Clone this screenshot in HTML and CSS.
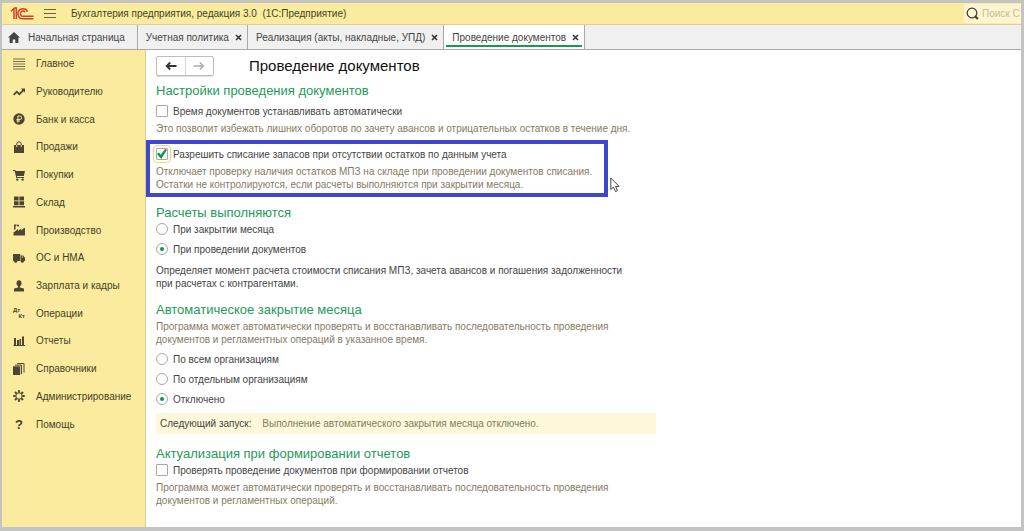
FILE: index.html
```html
<!DOCTYPE html>
<html lang="ru">

<head>
    <meta charset="UTF-8">
    <meta name="viewport" content="width=device-width, initial-scale=1.0">
    <title>Проведение документов</title>
    <link rel="stylesheet" href="styles.css">
</head>

<body>
    <header class="topbar">
        <svg class="logo" viewBox="0 0 24 13" fill="none" stroke="#d5402b" stroke-width="1.5">
            <path d="M1 4.2L4 1.500V12M6.300 12V1H4" />
            <path d="M17.500 4.600A5 5 0 1 0 13 11.800H23.500" />
            <path d="M15.200 5.200A2.600 2.600 0 1 0 13 9.300H23.500" />
        </svg>
        <button class="menu-btn" type="button" aria-label="Меню">
            <svg viewBox="0 0 12 10" stroke="#6b6440" stroke-width="1">
                <path d="M0 .5h12M0 4.5h12M0 8.5h12" />
            </svg>
        </button>
        <span class="app-title">Бухгалтерия предприятия, редакция 3.0&nbsp; (1С:Предприятие)</span>
        <label class="search">
            <svg viewBox="0 0 13 13" fill="none" stroke="#3a3a30">
                <circle cx="6" cy="6" r="4.8" stroke-width="1.2" />
                <path d="M9.2 9.2l2.6 2.8" stroke-width="2" />
            </svg>
            <input type="text" placeholder="Поиск С" aria-label="Поиск">
        </label>
    </header>

    <nav class="tabs">
        <div class="tab tab-home">
            <svg viewBox="0 0 12 11" fill="#444">
                <path d="M6 0l6 5.6H10.4V11H7.3V7.4H4.7V11H1.6V5.6H0z" />
            </svg>
            <a href="#">Начальная страница</a>
        </div>
        <div class="tab"><a href="#">Учетная политика</a><button class="close" type="button" aria-label="Закрыть"><svg viewBox="0 0 7 7"><path d="M1 1l5 5M6 1l-5 5" /></svg></button></div>
        <div class="tab"><a href="#">Реализация (акты, накладные, УПД)</a><button class="close" type="button" aria-label="Закрыть"><svg viewBox="0 0 7 7"><path d="M1 1l5 5M6 1l-5 5" /></svg></button></div>
        <div class="tab active"><a href="#">Проведение документов</a><button class="close" type="button" aria-label="Закрыть"><svg viewBox="0 0 7 7"><path d="M1 1l5 5M6 1l-5 5" /></svg></button></div>
    </nav>

    <div class="workspace">
        <nav class="sidebar">
            <ul>
                <li><a href="#"><svg viewBox="0 0 12 12"><path d="M0 .5h12v1H0zM0 3h12v1H0zM0 5.500h12v1H0zM0 8h12v1H0zM0 10.500h12v1H0z" opacity=".75" /></svg>Главное</a></li>
                <li><a href="#"><svg viewBox="0 0 12 12"><path d="M0 8.200L3.800 4.400 6.400 7 9.300 4 8 2.600H12V6.600L10.600 5.300 6.400 9.500 3.800 6.900 1.300 9.500z" /></svg>Руководителю</a></li>
                <li><a href="#"><svg viewBox="0 0 12 12"><circle cx="6" cy="6" r="5.700" /><path class="cutout" d="M4.900 9.500V3h2a1.700 1.700 0 0 1 0 3.500H3.500M3.500 8h3.500" /></svg>Банк и касса</a></li>
                <li><a href="#"><svg viewBox="0 0 12 12"><path d="M1 4h10v8H1z" /><path class="line" d="M3.800 6V3a2.200 2.200 0 0 1 4.400 0v3" /><path class="cutout" d="M3.800 4v2M8.200 4v2" /></svg>Продажи</a></li>
                <li><a href="#"><svg viewBox="0 0 12 12"><path d="M0 1h2.400l.4 1H12L10.800 7H4l.2 1H11v1H3.300L1.700 2H0z" /><circle cx="4.300" cy="10.600" r="1.200" /><circle cx="9.600" cy="10.600" r="1.200" /></svg>Покупки</a></li>
                <li><a href="#"><svg viewBox="0 0 12 12"><path d="M1 .5h4.600v4H1zM6.400.5H11v4H6.400zM1 5.300h4.600v4H1zM6.400 5.300H11v4H6.400zM0 10h12v1.500H0z" /></svg>Склад</a></li>
                <li><a href="#"><svg viewBox="0 0 12 12"><path d="M.5 11.500V8.500L5 5v2l3.200-2.500v2L11 4h1v7.500z" /><path d="M1 6V2h1.500v3zM1 .5h2.500v1.500H1zM4 .8h2v1.500H4z" /></svg>Производство</a></li>
                <li><a href="#"><svg viewBox="0 0 12 12"><path d="M0 2h7.300v7H0zM7.800 3.500h2.500L12 6v3H7.800z" /><path class="cutout" d="M8.800 5h1.300" /><circle cx="2.700" cy="9.200" r="1.500" /><circle cx="9.300" cy="9.200" r="1.500" /></svg>ОС и НМА</a></li>
                <li><a href="#"><svg viewBox="0 0 12 12"><ellipse cx="6" cy="3.300" rx="2.500" ry="3" /><path d="M5 5.500h2v2l3.200.8q.8.300.8 1.200v2H1v-2q0-.9.800-1.200L5 7.500z" /></svg>Зарплата и кадры</a></li>
                <li><a href="#"><span class="dt-kt"><b>Дт</b><b>Кт</b></span>Операции</a></li>
                <li><a href="#"><svg viewBox="0 0 12 12"><path d="M1 3h2v7H1zM4 5h2v5H4zM6.500 4H8v6H6.500zM9 1.500h2V10H9zM.5 10H12v1H.5z" /></svg>Отчеты</a></li>
                <li><a href="#"><svg viewBox="0 0 12 12"><path d="M0 3.300h7.200V12H0z" /><path class="line" d="M2 2.200h6.500V11M4 .6h7V9.500" /></svg>Справочники</a></li>
                <li><a href="#"><svg viewBox="0 0 12 12"><circle class="line" cx="6" cy="6" r="3.200" /><path class="line teeth" d="M6 .3v2.400M6 9.300v2.400M.3 6h2.400M9.300 6h2.400M2 2l1.600 1.600M8.400 8.400L10 10M10 2L8.400 3.600M3.600 8.400L2 10" /></svg>Администрирование</a></li>
                <li><a href="#"><b class="question">?</b>Помощь</a></li>
            </ul>
        </nav>

        <main class="content">
            <div class="page-head">
                <div class="history">
                    <button type="button" aria-label="Назад"><svg viewBox="0 0 12 10" fill="none" stroke="#333" stroke-width="1.800"><path d="M11.500 5H2M5.200 1.500L1.700 5l3.500 3.500" /></svg></button>
                    <button type="button" aria-label="Вперед"><svg viewBox="0 0 12 10" fill="none" stroke="#aaa" stroke-width="1.500"><path d="M.5 5H10M6.800 1.500L10.300 5 6.800 8.500" /></svg></button>
                </div>
                <h1>Проведение документов</h1>
            </div>

            <section class="posting">
                <h2>Настройки проведения документов</h2>
                <label class="option"><input type="checkbox">Время документов устанавливать автоматически</label>
                <p class="hint">Это позволит избежать лишних оборотов по зачету авансов и отрицательных остатков в течение дня.</p>
                <div class="highlight">
                    <label class="option"><input type="checkbox" class="focused" checked>Разрешить списание запасов при отсутствии остатков по данным учета</label>
                    <p class="hint">Отключает проверку наличия остатков МПЗ на складе при проведении документов списания.<br>Остатки не контролируются, если расчеты выполняются при закрытии месяца.</p>
                    <svg class="cursor" viewBox="0 0 10 16" fill="#fff" stroke="#444">
                        <path d="M.8 1v11.500l2.700-2.400 2 4.500 2-.9-2-4.300h3.700z" />
                    </svg>
                </div>
            </section>

            <section class="calculation">
                <h2>Расчеты выполняются</h2>
                <div class="options">
                    <label class="option"><input type="radio" name="calc">При закрытии месяца</label>
                    <label class="option"><input type="radio" name="calc" checked>При проведении документов</label>
                </div>
                <p class="note">Определяет момент расчета стоимости списания МПЗ, зачета авансов и погашения задолженности<br>при расчетах с контрагентами.</p>
            </section>

            <section>
                <h2>Автоматическое закрытие месяца</h2>
                <p class="hint lead">Программа может автоматически проверять и восстанавливать последовательность проведения<br>документов и регламентных операций в указанное время.</p>
                <div class="options">
                    <label class="option"><input type="radio" name="auto">По всем организациям</label>
                    <label class="option"><input type="radio" name="auto">По отдельным организациям</label>
                    <label class="option"><input type="radio" name="auto" checked>Отключено</label>
                </div>
                <p class="next-run"><span>Следующий запуск:</span> Выполнение автоматического закрытия месяца отключено.</p>
            </section>

            <section>
                <h2>Актуализация при формировании отчетов</h2>
                <label class="option"><input type="checkbox">Проверять проведение документов при формировании отчетов</label>
                <p class="hint">Программа может автоматически проверять и восстанавливать последовательность проведения<br>документов и регламентных операций.</p>
            </section>
        </main>
    </div>
</body>

</html>
```
FILE: styles.css
```css
* {
    box-sizing: border-box;
}

body {
    margin: 0;
    min-height: 100vh;
    display: flex;
    flex-direction: column;
    border: solid #c3c3c3;
    border-width: 3px 3px 4px 2px;
    background-color: #fff;
    font-family: "Liberation Sans", Arial, sans-serif;
    font-size: 10px;
    color: #444;
}

h1,
h2,
p,
ul {
    margin: 0;
    padding: 0;
    font-weight: normal;
}

a {
    color: inherit;
    text-decoration: none;
}

button {
    border: none;
    padding: 0;
    background: none;
    cursor: pointer;
}

svg {
    display: block;
    flex: none;
}

/* top bar */
.topbar {
    display: flex;
    align-items: center;
    height: 22px;
    padding-left: 8px;
    background-color: #fbeb9e;
    border-bottom: 1px solid #d9cf98;
}

.logo {
    width: 24px;
    height: 13px;
}

.menu-btn {
    margin-left: 10px;
}

.menu-btn svg {
    width: 12px;
    height: 10px;
}

.app-title {
    margin-left: 15px;
    color: #453f28;
}

.search {
    display: flex;
    align-items: center;
    gap: 3px;
    width: 57px;
    height: 19px;
    margin-left: auto;
    padding-left: 2px;
    background-color: #fdf5cf;
}

.search svg {
    width: 13px;
    height: 13px;
}

.search input {
    flex: 1;
    min-width: 0;
    padding: 0;
    border: none;
    outline: none;
    background: none;
    font: inherit;
}

.search input::placeholder {
    color: #c5bd98;
}

/* tabs */
.tabs {
    display: flex;
    height: 25px;
    background-color: #f0f0f0;
    border-bottom: 1px solid #a9a9a9;
}

.tab {
    display: flex;
    align-items: center;
    gap: 6px;
    padding: 0 5px 0 8px;
    border-right: 1px solid #a9a9a9;
}

.tab-home {
    gap: 8px;
    padding: 0 12px 0 6px;
}

.tab-home svg {
    width: 12px;
    height: 11px;
}

.close svg {
    width: 7px;
    height: 7px;
    stroke: #333;
    stroke-width: 1.5;
}

.tab.active {
    background: linear-gradient(#179a50, #179a50) center bottom 2px / calc(100% - 4px) 2px no-repeat #fff;
}

/* sections panel */
.workspace {
    display: flex;
    flex: 1;
}

.sidebar {
    flex: none;
    width: 144px;
    background-color: #fbeb9e;
    border-right: 1px solid #d8cd90;
}

.sidebar ul {
    display: grid;
    grid-auto-rows: 1fr;
    height: 388px;
    list-style: none;
}

.sidebar a {
    display: flex;
    align-items: center;
    gap: 11px;
    height: 100%;
    padding-left: 11px;
    color: #453f28;
}

.sidebar svg {
    width: 12px;
    height: 12px;
    fill: #4a4632;
}

.sidebar .line {
    fill: none;
    stroke: #4a4632;
}

.sidebar .teeth {
    stroke-width: 2;
}

.sidebar .cutout {
    fill: none;
    stroke: #fbeb9e;
}

.dt-kt {
    display: flex;
    flex-direction: column;
    width: 12px;
    font-size: 6px;
    line-height: 6px;
}

.dt-kt b:last-child {
    align-self: flex-end;
}

.question {
    width: 12px;
    font-size: 13px;
    text-align: center;
}

/* form */
.content {
    flex: 1;
    padding: 6px 10px 0;
}

.page-head {
    display: flex;
    align-items: center;
    gap: 35px;
    margin-bottom: 6px;
}

.history {
    display: flex;
    width: 58px;
    height: 20px;
    border: 1px solid #bdbdbd;
    border-radius: 2px;
    box-shadow: 0 1px 1px #ddd;
}

.history button {
    display: flex;
    flex: 1;
    align-items: center;
    justify-content: center;
}

.history button + button {
    border-left: 1px solid #d5d5d5;
}

.history svg {
    width: 12px;
    height: 10px;
}

h1 {
    font-size: 15px;
    line-height: 20px;
    color: #111;
}

h2 {
    font-size: 13px;
    line-height: 18px;
    color: #239a58;
}

section {
    margin-top: 11px;
}

.posting {
    margin-top: 0;
}

.calculation {
    margin-top: 7px;
}

.option {
    display: flex;
    align-items: center;
    gap: 5px;
    height: 14px;
}

.posting h2 {
    margin-bottom: 4px;
}

.options {
    display: flex;
    flex-direction: column;
    gap: 6px;
}

.option input {
    appearance: none;
    display: grid;
    place-items: center;
    width: 12px;
    height: 12px;
    margin: 0;
    border: 1px solid #a8a8a8;
    border-radius: 1px;
    background-color: #fff;
}

.option input[type="radio"] {
    border-radius: 50%;
}

.option input[type="radio"]:checked::before {
    content: "";
    width: 4px;
    height: 4px;
    border-radius: 50%;
    background-color: #129447;
}

.option input[type="checkbox"]:checked::before {
    content: "";
    width: 10px;
    height: 10px;
    background-color: #129447;
    clip-path: polygon(0 50%, 20% 34%, 38% 58%, 80% 0, 100% 8%, 42% 100%);
}

.option .focused {
    outline: 1px solid #ecd977;
    outline-offset: 2px;
}

.hint,
.note {
    line-height: 13px;
}

.hint {
    margin-top: 4px;
    color: #847c5e;
}

.hint.lead {
    margin: 1px 0 6px;
}

.note {
    margin-top: 8px;
}

.highlight {
    position: relative;
    width: 462px;
    margin: 5px 0 0 -10px;
    padding: 3px 0 2px 6px;
    border: 4px solid #3f48cc;
    white-space: nowrap;
}

.cursor {
    position: absolute;
    right: -16px;
    bottom: 0;
    width: 10px;
    height: 16px;
}

.next-run {
    max-width: 500px;
    margin-top: 7px;
    padding: 0 4px;
    background-color: #fdf8d9;
    line-height: 21px;
    color: #847c5e;
}

.next-run span {
    margin-right: 8px;
    color: #444;
}
```
